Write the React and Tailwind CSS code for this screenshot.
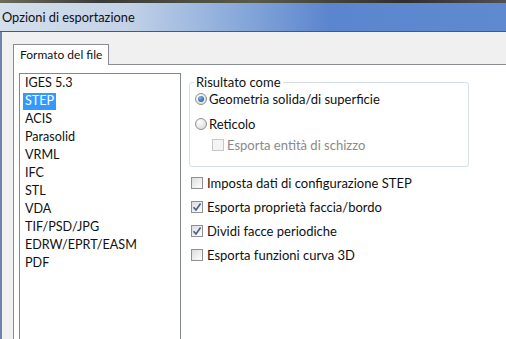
import React from "react";

const items = ["IGES 5.3","STEP","ACIS","Parasolid","VRML","IFC","STL","VDA","TIF/PSD/JPG","EDRW/EPRT/EASM","PDF"];

function Radio({ checked }) {
  return (
    <span className="relative w-[12px] h-[12px] rounded-full border border-[#8e8f8f] bg-[radial-gradient(circle_at_35%_30%,#ffffff,#d4d4d4)] flex items-center justify-center shrink-0">
      {checked && <span className="w-[6px] h-[6px] rounded-full bg-[radial-gradient(circle_at_35%_30%,#7fb2e6,#1c4b8c)]" />}
    </span>
  );
}

function Check({ checked, disabled }) {
  return (
    <span className={`w-[12px] h-[12px] border flex items-center justify-center shrink-0 ${disabled ? "border-[#c8c8c8] bg-[#f4f4f4]" : "border-[#8e8f8f] bg-[linear-gradient(135deg,#dcdcdc,#ffffff)]"}`}>
      {checked && (
        <svg width="10" height="10" viewBox="0 0 10 10">
          <path d="M1.5 5.2 L4 8 L8.6 1.6" fill="none" stroke="#4b5e8c" strokeWidth="1.7" />
        </svg>
      )}
    </span>
  );
}

export default function App() {
  return (
    <div className="w-[506px] h-[339px] overflow-hidden flex flex-col bg-[#f0f0f0] text-[#111] text-[13px] leading-none font-['Lato',sans-serif]">
      <div className="h-[3px] bg-[linear-gradient(90deg,#6b6b5a,#3a3a3a_20%,#5a5a4a_50%,#2f2f2f_80%,#505050)] shrink-0" />
      <div className="h-[28px] shrink-0 flex items-center pl-[2px] text-[12.8px] text-[#101010] bg-[linear-gradient(90deg,#d4dfec_0%,#c3d2e7_25%,#8eaddc_45%,#5b85ce_65%,#5f89d0_100%)]">
        Opzioni di esportazione
      </div>
      <div className="h-px bg-[#3c5a8c] shrink-0" />
      <div className="flex-1 flex flex-col border-l-2 border-[#6e84a8] pl-[11px] pt-[11px]">
        <div className="flex">
          <div className="h-[21px] whitespace-nowrap bg-white border border-b-0 border-[#898c95] flex items-center px-[6px] text-[12px] relative top-px z-10">
            Formato del file
          </div>
        </div>
        <div className="flex-1 bg-white border border-[#898c95] border-r-0 flex pt-[8px] pl-[5px]">
          <div className="w-[162px] h-[300px] border border-[#828790] bg-white flex flex-col shrink-0 text-[12.6px]">
            {items.map((it, i) => (
              <div key={it} className="h-[18px] flex items-center pl-[3px] whitespace-nowrap">
                <span className={`h-[17px] flex items-center px-[2px] ${i === 1 ? "bg-[#3399ff] text-white" : ""}`}>{it}</span>
              </div>
            ))}
          </div>
          <div className="flex flex-col pl-[8px] pt-[9px]">
            <div className="w-[280px] h-[85px] border border-[#d5dfe5] rounded-[3px] relative">
              <span className="absolute left-[4px] top-[-8px] bg-white px-[2px] h-[15px] flex items-center">Risultato come</span>
              <div className="flex flex-col pt-[9px] pl-[5px]">
                <div className="h-[14px] flex items-center gap-[2px]"><Radio checked /><span>Geometria solida/di superficie</span></div>
                <div className="h-[14px] mt-[11px] flex items-center gap-[2px]"><Radio /><span>Reticolo</span></div>
                <div className="h-[14px] mt-[7px] ml-[17px] flex items-center gap-[3px] text-[#8a8a8a]"><Check disabled /><span>Esporta entità di schizzo</span></div>
              </div>
            </div>
            <div className="flex flex-col pt-[9px] pl-[2px]">
              {[["Imposta dati di configurazione STEP", false], ["Esporta proprietà faccia/bordo", true], ["Dividi facce periodiche", true], ["Esporta funzioni curva 3D", false]].map(([t, c], i) => (
                <div key={t} className={`h-[14px] flex items-center gap-[4px] ${i ? "mt-[10px]" : ""}`}><Check checked={c} /><span>{t}</span></div>
              ))}
            </div>
          </div>
        </div>
      </div>
    </div>
  );
}
